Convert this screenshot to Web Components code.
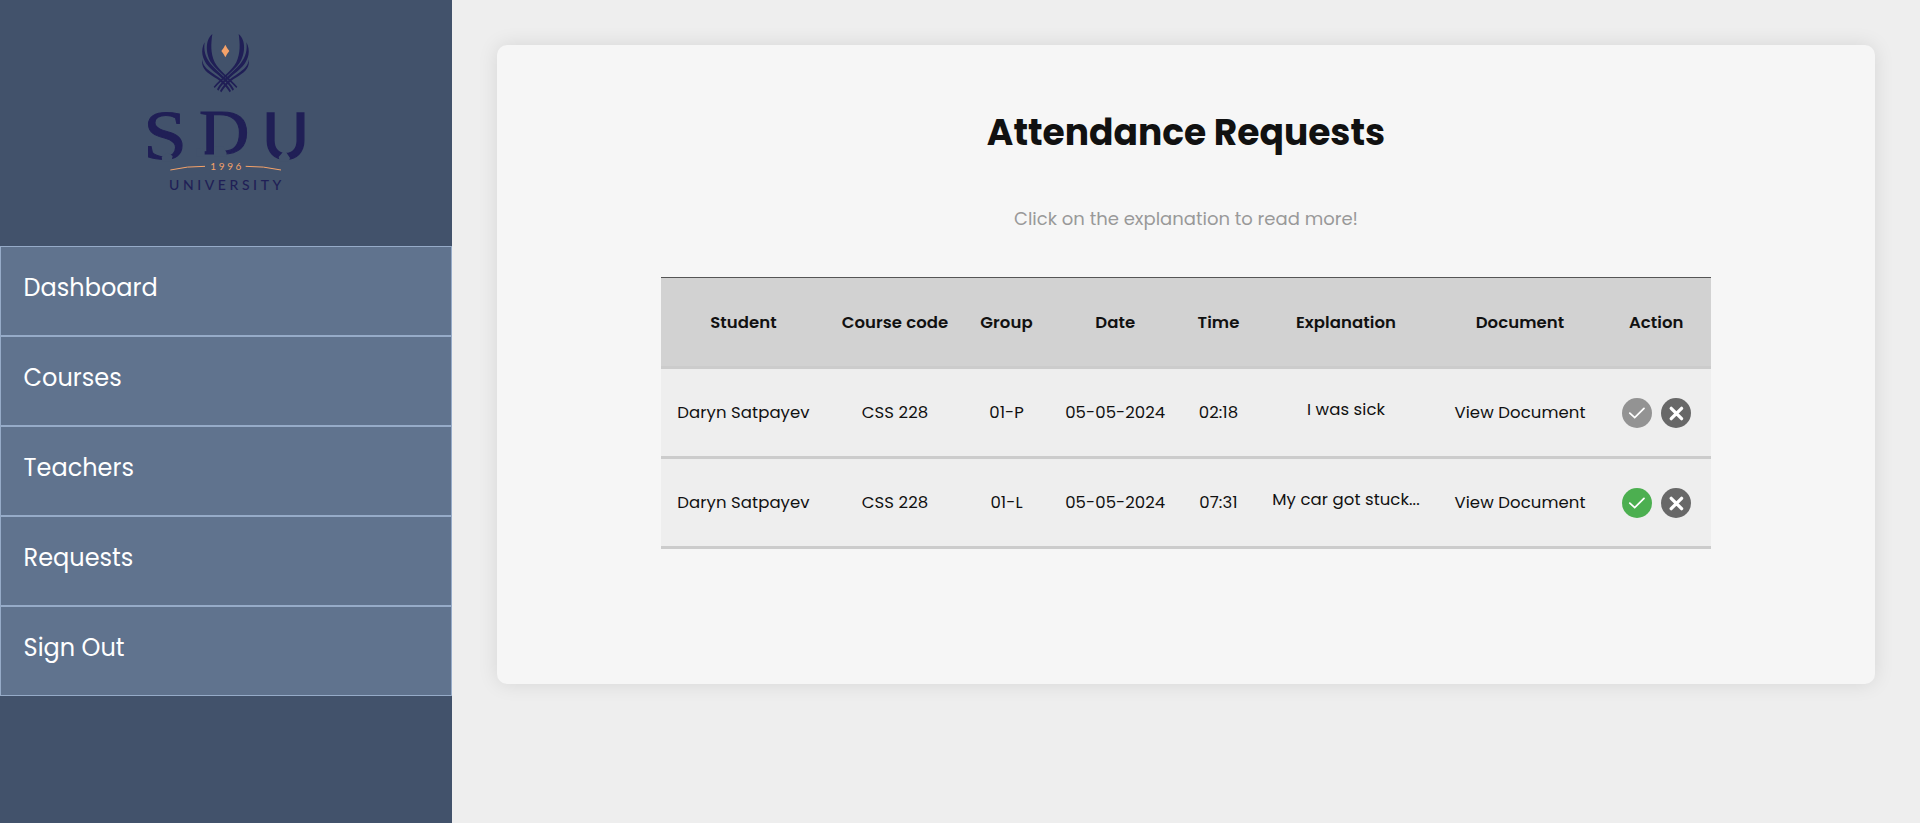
<!DOCTYPE html>
<html lang="en">
<head>
<meta charset="utf-8">
<title>Attendance Requests</title>
<style>
html,body{margin:0;height:100%}
body{background:#eee;color:#111;font-family:Poppins,Inter,"Open Sans",sans-serif;overflow:hidden}
</style>
</head>
<body>
<app-shell>
  <side-nav slot="nav">
    <nav-item>Dashboard</nav-item>
    <nav-item>Courses</nav-item>
    <nav-item>Teachers</nav-item>
    <nav-item>Requests</nav-item>
    <nav-item>Sign Out</nav-item>
  </side-nav>
  <content-card>
    <span slot="title">Attendance Requests</span>
    <span slot="hint">Click on the explanation to read more!</span>
    <request-table></request-table>
  </content-card>
</app-shell>
<script>
const define = (name, html, setup) => customElements.define(name, class extends HTMLElement {
  connectedCallback() {
    if (this.shadowRoot) return;
    const t = document.createElement('template');
    t.innerHTML = html;
    this.attachShadow({mode: 'open'}).appendChild(t.content.cloneNode(true));
    if (setup) setup.call(this, this.shadowRoot);
  }
});

define('app-shell', `<style>
  :host{display:flex;height:100vh}
  main{flex:1;padding:45px 45px 0}
  </style><slot name="nav"></slot><main><slot></slot></main>`);

define('content-card', `<style>
  :host{display:flex;flex-direction:column;align-items:center;box-sizing:border-box;height:639px;padding-top:61px;background:#f6f6f6;border-radius:10px;box-shadow:0 0 20px rgba(0,0,0,.1)}
  h1{margin:0;font-size:36px;line-height:54px;font-weight:700}
  p{margin:45px 0 44px;font-size:18px;line-height:28px;color:#999}
  </style><h1><slot name="title"></slot></h1><p><slot name="hint"></slot></p><slot></slot>`);

define('side-nav', `<style>
  :host{display:block;width:452px;background:#42526b}
  sdu-logo{padding:20px 0 46px 130px}
  </style><sdu-logo></sdu-logo><nav><slot></slot></nav>`);

define('nav-item', `<style>
  :host{display:block;box-sizing:border-box;height:90px;border:1px solid #96abc8;background:#60738e;color:#fff;padding:20px 0 0 22.6px;font-size:24px;line-height:42px}
  </style><slot></slot>`);

define('sdu-logo', `<style>
  :host{display:block}
  svg{display:block}
  </style><svg width="190" height="180" viewBox="0 0 570 540">
  <defs><g id="wing" fill="#201f56">
    <path d="M247 42C224 60 227 105 245 130C260 151 294 177 319 204L322 200C300 175 268 153 254 127C241 99 243 71 247 42Z"/>
    <path d="M224 67C210 91 217 119 235 139C255 161 290 180 308 212L312 208C297 179 264 158 243 133C224 109 221 89 224 67Z"/>
    <path d="M217 118C213 141 226 155 246 167C269 180 284 193 299 217L303 213C289 187 269 174 250 161C229 147 218 137 217 118Z"/>
  </g></defs>
  <use href="#wing"/><use href="#wing" transform="matrix(-1 0 0 1 573 0)"/>
  <path d="M286 74Q291 85 298 93Q291 101 286 112Q281 101 274 93Q281 85 286 74Z" fill="#f5a269"/>
  <g fill="#201f56" stroke="#201f56" stroke-width="3" font-family="Liberation Serif,serif">
    <text x="40" y="417" font-size="211" textLength="131" lengthAdjust="spacingAndGlyphs">S</text>
    <text x="207" y="401" font-size="189" textLength="151" lengthAdjust="spacingAndGlyphs">D</text>
  </g>
  <text x="397" y="418" font-size="194" textLength="140" lengthAdjust="spacingAndGlyphs" fill="#201f56" stroke="#201f56" stroke-width="4" font-family="Lato" font-weight="500">U</text>
  <path d="M97 425L95 410L113 398L128 408L124 425ZM200 410V384L224 388V410ZM252 410V380H280L290 399L288 410ZM450 425L446 411L464 390L480 414L476 425Z" fill="#42526b"/>
  <path d="M121 450Q172 438 225 439M453 450Q400 438 347 439" fill="none" stroke="#f5a269" stroke-width="3"/>
  <text x="241" y="450" font-family="Lato" font-size="30" textLength="93" fill="#f5a269">1996</text>
  <text x="117" y="509" font-family="Lato" font-weight="500" font-size="42" fill="#201f56" textLength="337">UNIVERSITY</text>
  </svg>`);

define('action-icon', `<style>
  :host{display:block;width:30px;height:30px;border-radius:50%}
  :host([kind=done]){background:#939393}
  :host([kind=accept]){background:#4caf50}
  :host([kind=reject]){background:#686868}
  svg{display:block}
  :host([kind=reject]) .ok,:host(:not([kind=reject])) .no{display:none}
  </style><svg width="30" height="30" viewBox="0 0 30 30" fill="none" stroke="#fff">
  <path class="ok" d="M7.8 15.2L12.7 19.6L22 10.4" stroke-width="1.8" stroke-linecap="round"/>
  <path class="no" d="M10.2 10.3L20.6 20.7M20.6 10.3L10.2 20.7" stroke-width="3.3" stroke-linecap="round"/></svg>`);

define('request-table', `<style>
  :host{display:block;width:1050px;border-top:1px solid #555;font-size:16.5px;letter-spacing:.08px}
  .row{display:grid;grid-template-columns:165px 138px 85px 132.5px 74px 181px 167px 107.5px;height:87px;border-bottom:3px solid #ccc;background:#eee;line-height:24px}
  .row>div{display:flex;align-items:center;justify-content:center;white-space:nowrap}
  .head{box-sizing:border-box;height:91px;padding-top:1px;background:#d2d2d2;font-weight:600}
  .row:not(.head)>.why{padding-bottom:6px}
  .row>:last-child{padding-right:2px}
  .row>.acts{gap:9px}
  </style><section></section>`, function (root) {
  const rows = [
    ['Student','Course code','Group','Date','Time','Explanation','Document','Action'],
    ['Daryn Satpayev','CSS 228','01-P','05-05-2024','02:18','I was sick','View Document',{kind:'done'}],
    ['Daryn Satpayev','CSS 228','01-L','05-05-2024','07:31','My car got stuck...','View Document',{kind:'accept'}]
  ];
  root.querySelector('section').innerHTML = rows.map((r, i) =>
    `<div class="row${i ? '' : ' head'}">` + r.map((c, j) => c.kind
      ? `<div class="acts"><action-icon kind="${c.kind}"></action-icon><action-icon kind="reject"></action-icon></div>`
      : `<div${j === 5 ? ' class="why"' : ''}><span>${c}</span></div>`).join('') + '</div>').join('');
});
</script>
</body>
</html>
